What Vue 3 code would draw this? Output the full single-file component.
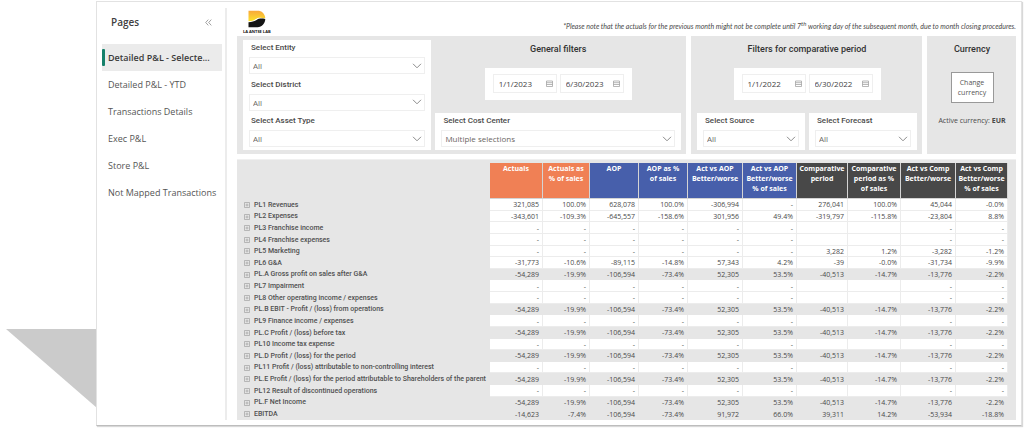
<script setup>
import { ref } from 'vue'

const pages = [
  'Detailed P&L - Selecte...',
  'Detailed P&L - YTD',
  'Transactions Details',
  'Exec P&L',
  'Store P&L',
  'Not Mapped Transactions',
]
const activePage = ref(0)

const scopeFilters = [
  { id: 'entity', label: 'Select Entity' },
  { id: 'district', label: 'Select District' },
  { id: 'asset', label: 'Select Asset Type' },
]

const compareFilters = [
  { id: 'source', label: 'Select Source' },
  { id: 'forecast', label: 'Select Forecast' },
]

const generalDates = [
  { id: 'general-from', label: 'From', value: '1/1/2023' },
  { id: 'general-to', label: 'To', value: '6/30/2023' },
]
const compareDates = [
  { id: 'compare-from', label: 'Comparative from', value: '1/1/2022' },
  { id: 'compare-to', label: 'Comparative to', value: '6/30/2022' },
]

const columns = [
  { label: 'Actuals', tone: 'orange' },
  { label: 'Actuals as\n% of sales', tone: 'orange' },
  { label: 'AOP', tone: 'blue' },
  { label: 'AOP as %\nof sales', tone: 'blue' },
  { label: 'Act vs AOP\nBetter/worse', tone: 'blue' },
  { label: 'Act vs AOP\nBetter/worse\n% of sales', tone: 'blue' },
  { label: 'Comparative\nperiod', tone: 'dark' },
  { label: 'Comparative\nperiod as %\nof sales', tone: 'dark' },
  { label: 'Act vs Comp\nBetter/worse', tone: 'dark' },
  { label: 'Act vs Comp\nBetter/worse\n% of sales', tone: 'dark' },
]

const none = ['-', '-', '-', '-', '-', '-', '', '', '-', '-']
const profit = ['-54,289', '-19.9%', '-106,594', '-73.4%', '52,305', '53.5%', '-40,513', '-14.7%', '-13,776', '-2.2%']

const rows = [
  { name: 'PL1 Revenues', cells: ['321,085', '100.0%', '628,078', '100.0%', '-306,994', '-', '276,041', '100.0%', '45,044', '-0.0%'] },
  { name: 'PL2 Expenses', cells: ['-343,601', '-109.3%', '-645,557', '-158.6%', '301,956', '49.4%', '-319,797', '-115.8%', '-23,804', '8.8%'] },
  { name: 'PL3 Franchise income', cells: none },
  { name: 'PL4 Franchise expenses', cells: none },
  { name: 'PL5 Marketing', cells: ['-', '-', '-', '-', '-', '-', '3,282', '1.2%', '-3,282', '-1.2%'] },
  { name: 'PL6 G&A', cells: ['-31,773', '-10.6%', '-89,115', '-14.8%', '57,343', '4.2%', '-39', '-0.0%', '-31,734', '-9.9%'] },
  { name: 'PL.A Gross profit on sales after G&A', cells: profit, total: true },
  { name: 'PL7 Impairment', cells: none },
  { name: 'PL8 Other operating income / expenses', cells: none },
  { name: 'PL.B EBIT - Profit / (loss) from operations', cells: profit, total: true },
  { name: 'PL9 Finance income / expenses', cells: none },
  { name: 'PL.C Profit / (loss) before tax', cells: profit, total: true },
  { name: 'PL10 Income tax expense', cells: none },
  { name: 'PL.D Profit / (loss) for the period', cells: profit, total: true },
  { name: 'PL11 Profit / (loss) attributable to non-controlling interest', cells: none },
  { name: 'PL.E Profit / (loss) for the period attributable to Shareholders of the parent', cells: profit, total: true },
  { name: 'PL12 Result of discontinued operations', cells: none },
  { name: 'PL.F Net Income', cells: profit, total: true },
  { name: 'EBITDA', cells: ['-14,623', '-7.4%', '-106,594', '-73.4%', '91,972', '66.0%', '39,311', '14.2%', '-53,934', '-18.8%'], total: true },
]
</script>

<template>
  <div class="stage">
    <div class="shadow" aria-hidden="true"></div>
    <div class="window">
      <nav class="pages" aria-label="Pages">
        <div class="pages-head">
          <h2>Pages</h2>
          <button class="collapse" type="button" aria-label="Collapse pages">
            <svg viewBox="0 0 7 7" width="7" height="7"><path d="M3.3.6.7 3.5l2.6 2.9M6.3.6 3.7 3.5l2.6 2.9" /></svg>
          </button>
        </div>
        <a
          v-for="(page, i) in pages"
          :key="page"
          href="#"
          class="page"
          :class="{ active: i === activePage }"
          @click.prevent="activePage = i"
        >{{ page }}</a>
      </nav>

      <main class="report">
        <header class="top">
          <div class="logo">
            <svg viewBox="0 0 18 18" width="18" height="18" aria-hidden="true">
              <defs>
                <linearGradient id="sun" x1="0" y1="0" x2="0" y2="1">
                  <stop offset="0" stop-color="#f9a83a" />
                  <stop offset="1" stop-color="#fbe32c" />
                </linearGradient>
              </defs>
              <path fill="url(#sun)" d="M.5.8h9c4.400 0 7.200 2.600 7.800 7.200-2.600.6-3.800-.6-6.300-.3-3.200.4-4 3.300-10.500 3.600z" />
              <path fill="#151515" d="M.5 12.300c4-.3 6.500-1.300 8.500-2.600 2.300-1.400 4.600-1.200 8.300-.7-.3 4.600-3.300 8.200-7.800 8.200h-9z" />
            </svg>
            <span>LA ANTSE LAB</span>
          </div>
          <p class="note">
            *Please note that the actuals for the previous month might not be complete until 7<sup>th</sup> working day of the subsequent month, due to month closing procedures.
          </p>
        </header>

        <div class="filters">
          <section class="panel general">
            <div class="card scope">
              <div v-for="f in scopeFilters" :key="f.id" class="field">
                <label :for="f.id">{{ f.label }}</label>
                <div class="drop">
                  <select :id="f.id"><option>All</option></select>
                  <svg viewBox="0 0 10 6" width="10" height="6"><path d="M1 .8l4 4 4-4" /></svg>
                </div>
              </div>
            </div>
            <div class="stack">
              <h3>General filters</h3>
              <div class="card dates">
                <div v-for="d in generalDates" :key="d.id" class="date">
                  <input :id="d.id" type="text" :aria-label="d.label" :value="d.value" />
                  <svg viewBox="0 0 7 7" width="7" height="7"><path d="M.5 1h6v5.500h-6zM.5 2.700h6M.5 4.500h6" /></svg>
                </div>
              </div>
              <div class="card field cost">
                <label for="cost">Select Cost Center</label>
                <div class="drop">
                  <select id="cost"><option>Multiple selections</option></select>
                  <svg viewBox="0 0 10 6" width="10" height="6"><path d="M1 .8l4 4 4-4" /></svg>
                </div>
              </div>
            </div>
          </section>

          <section class="panel compare">
            <h3>Filters for comparative period</h3>
            <div class="card dates">
              <div v-for="d in compareDates" :key="d.id" class="date">
                <input :id="d.id" type="text" :aria-label="d.label" :value="d.value" />
                <svg viewBox="0 0 7 7" width="7" height="7"><path d="M.5 1h6v5.500h-6zM.5 2.700h6M.5 4.500h6" /></svg>
              </div>
            </div>
            <div class="pair">
              <div v-for="f in compareFilters" :key="f.id" class="card field">
                <label :for="f.id">{{ f.label }}</label>
                <div class="drop">
                  <select :id="f.id"><option>All</option></select>
                  <svg viewBox="0 0 10 6" width="10" height="6"><path d="M1 .8l4 4 4-4" /></svg>
                </div>
              </div>
            </div>
          </section>

          <section class="panel currency">
            <h3>Currency</h3>
            <button type="button" class="change">Change currency</button>
            <p>Active currency: <b>EUR</b></p>
          </section>
        </div>

        <section class="matrix">
          <table>
            <colgroup>
              <col />
              <col v-for="(c, i) in columns" :key="i" :class="'c' + i" />
            </colgroup>
            <thead>
              <tr>
                <td></td>
                <th v-for="c in columns" :key="c.label" scope="col" :class="c.tone">{{ c.label }}</th>
              </tr>
            </thead>
            <tbody>
              <tr v-for="r in rows" :key="r.name" :class="{ total: r.total }">
                <th scope="row">
                  <svg viewBox="0 0 6 6" width="6" height="6"><path d="M.5.5h5v5h-5zM1.500 3h3M3 1.500v3" /></svg>
                  <span>{{ r.name }}</span>
                </th>
                <td v-for="(v, i) in r.cells" :key="i">{{ v }}</td>
              </tr>
            </tbody>
          </table>
        </section>
      </main>
    </div>
  </div>
</template>

<style>
body {
  background: #fff;
}
</style>

<style scoped>
* {
  box-sizing: border-box;
}
.stage {
  position: relative;
  padding: 1px 2px 5px 96px;
  font-family: "Open Sans", "Noto Sans", sans-serif;
  color: #4a4a4a;
}
.shadow {
  position: absolute;
  left: 6px;
  bottom: 23px;
  width: 91px;
  height: 79px;
  background: #cbcbcb;
  clip-path: polygon(0 0, 100% 0, 100% 100%);
}
.window {
  position: relative;
  display: flex;
  background: #fff;
  border: 1px solid #e2e2e2;
  border-bottom-color: #bdbdbd;
  box-shadow: 1px 1px 1px #d8d8d8;
  padding: 6px 5px 5px 5px;
}
h2, h3, p {
  margin: 0;
}
.pages {
  flex: 0 0 125px;
  border-right: 2px solid #ececec;
}
.pages-head {
  display: flex;
  align-items: center;
  justify-content: space-between;
  height: 36px;
  padding: 0 13px 8px 9px;
}
h2 {
  font-size: 10px;
  font-weight: 600;
  line-height: 14px;
  color: #3f3f3f;
}
.collapse {
  display: flex;
  padding: 0;
  border: 0;
  background: none;
}
svg {
  flex: none;
}
.collapse path {
  fill: none;
  stroke: #8a8a8a;
  stroke-width: 0.8;
}
.page {
  position: relative;
  display: block;
  width: 120px;
  height: 27px;
  padding-left: 6px;
  font-size: 9px;
  line-height: 27px;
  white-space: nowrap;
  color: #555;
  text-decoration: none;
}
.page.active {
  font-weight: 600;
  color: #3a3a3a;
  background: #ebebeb;
}
.page.active::before {
  content: "";
  position: absolute;
  left: 0;
  top: 5px;
  width: 3px;
  height: 17px;
  border-radius: 1px;
  background: #15806a;
}
.report {
  flex: 1;
  min-width: 0;
  padding-left: 10px;
}
.top {
  display: flex;
  justify-content: space-between;
  align-items: flex-end;
  height: 28px;
  padding-left: 6px;
}
.logo {
  display: flex;
  flex-direction: column;
  align-items: center;
  gap: 1px;
  padding-bottom: 1px;
  font-size: 4px;
  font-weight: 700;
  line-height: 6px;
  color: #111;
}
.note {
  padding-bottom: 5px;
  font-family: Lato, sans-serif;
  font-size: 7px;
  font-style: italic;
  line-height: 10px;
  white-space: nowrap;
}
.note sup {
  font-size: 6px;
  line-height: 1;
}
.filters {
  display: grid;
  grid-template-columns: 449fr 231fr 89fr;
  gap: 5px;
}
.panel {
  min-width: 0;
  background: #e6e6e6;
  padding: 4px 5px 4px 6px;
}
.general {
  display: grid;
  grid-template-columns: 188fr 245fr;
  gap: 4px;
}
.compare,
.currency,
.stack {
  display: flex;
  flex-direction: column;
  align-items: center;
}
.card {
  background: #fff;
}
.scope {
  display: flex;
  flex-direction: column;
  justify-content: space-between;
  padding: 1px 6px 3px;
}
h3 {
  font-family: Roboto, sans-serif;
  font-size: 9px;
  font-weight: 500;
  line-height: 18px;
  color: #333;
}
label {
  display: block;
  padding-left: 2px;
  font-family: Roboto, sans-serif;
  font-size: 8px;
  font-weight: 500;
  line-height: 14px;
  color: #4a4a4a;
}
.drop {
  position: relative;
  display: flex;
  align-items: center;
  margin-top: 2px;
}
.drop select {
  appearance: none;
  width: 100%;
  height: 17px;
  padding: 0 16px 0 3px;
  border: 1px solid #efefef;
  border-radius: 0;
  background: #fff;
  font: 8px/15px "Open Sans", sans-serif;
  color: #6b675f;
}
.drop svg {
  position: absolute;
  right: 3px;
  pointer-events: none;
}
.drop path {
  fill: none;
  stroke: #8c8c8c;
}
.dates {
  display: flex;
  gap: 3px;
  margin: 10px 0 13px;
  padding: 6px 8px 7px;
}
.date {
  display: flex;
  align-items: center;
  width: 64px;
  height: 19px;
  padding: 0 3px 0 5px;
  border: 1px solid #efefef;
}
.date input {
  flex: 1;
  min-width: 0;
  padding: 0;
  border: 0;
  background: none;
  font: 8px/15px "Open Sans", sans-serif;
  color: #444;
}
.date path {
  fill: none;
  stroke: #999;
  stroke-width: 0.7;
}
.cost {
  align-self: stretch;
}
.pair {
  display: flex;
  gap: 4px;
  align-self: stretch;
}
.pair .card {
  flex: 1;
}
.card.field {
  padding: 1px 6px 3px;
}
.change {
  width: 43px;
  height: 31px;
  margin: 14px 0 12px;
  padding: 0;
  border: 1px solid #999;
  background: #fff;
  font: 7px/10px "Open Sans", sans-serif;
  color: #555;
}
.currency p {
  font-size: 7px;
  line-height: 12px;
  white-space: nowrap;
}
.matrix {
  margin-top: 5px;
  padding: 3px 8px 0 0;
  border-top: 1px solid #f0f0f0;
  background: #e6e6e6;
}
table {
  width: 100%;
  height: 257px;
  table-layout: fixed;
  border-collapse: separate;
  border-spacing: 0;
}
.c0 { width: 53px; }
.c1 { width: 47px; }
.c2 { width: 49px; }
.c3 { width: 49px; }
.c4 { width: 55px; }
.c5 { width: 54px; }
.c6 { width: 51px; }
.c7 { width: 53px; }
.c8 { width: 55px; }
.c9 { width: 52px; }
thead tr {
  height: 36px;
}
thead th {
  padding: 1px 0 0;
  border: solid #d4d4d4;
  border-width: 0 1px 1px 0;
  vertical-align: top;
  font-size: 7px;
  font-weight: 700;
  line-height: 10px;
  white-space: pre-line;
  color: #fff;
}
.orange { background: #f08055; }
.blue { background: #475fab; }
.dark { background: #484848; }
tbody td {
  padding: 1px 3px 0 0;
  border: solid #ececec;
  border-width: 0 1px 1px 0;
  background: #fff;
  font-size: 7px;
  line-height: 9px;
  text-align: right;
}
tbody .total td {
  border-color: #e6e6e6;
  background: #e6e6e6;
}
tbody th {
  padding: 0 0 0 7px;
  font-family: Roboto, sans-serif;
  font-size: 7px;
  font-weight: 500;
  line-height: 10px;
  text-align: left;
  white-space: nowrap;
  color: #505050;
}
tbody th svg {
  margin-right: 4px;
  vertical-align: middle;
}
tbody th path {
  fill: none;
  stroke: #a0a0a0;
  stroke-width: 0.7;
}
tbody th span {
  vertical-align: middle;
}
</style>
